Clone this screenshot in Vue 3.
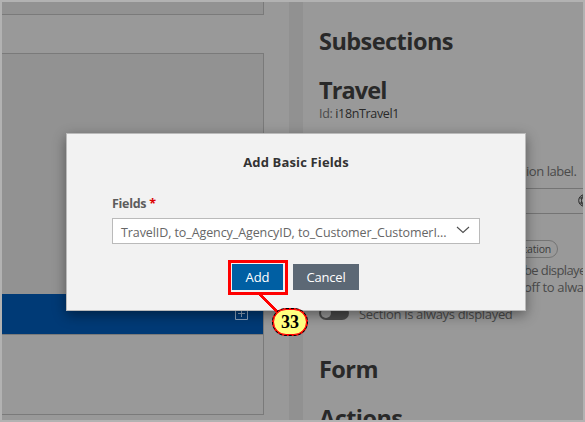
<script setup>
const fields = 'TravelID, to_Agency_AgencyID, to_Customer_CustomerI...'
</script>

<template>
  <div class="frame">
    <div class="page">
      <section class="outline">
        <div class="card first"></div>
        <div class="card second">
          <div class="selected">
            <svg width="13" height="14" viewBox="0 0 13 14" fill="none" stroke="#8da4bd">
              <path d="M.5 .5h12v13H.5zM6.5 4v7M3 7.5h7" />
            </svg>
          </div>
          <div class="rest"></div>
        </div>
      </section>
      <div class="gutter"></div>
      <section class="details">
        <h2 class="sub">Subsections</h2>
        <h2 class="travel">Travel</h2>
        <p class="id">Id: <b>i18nTravel1</b></p>
        <p class="hint">ion label.</p>
        <div class="input">
          <svg width="13" height="13" viewBox="0 0 13 13" fill="none" stroke="#292929">
            <circle cx="6.5" cy="6.5" r="5.8" />
            <ellipse cx="6.5" cy="6.5" rx="3" ry="5.8" />
            <path d="M1.5 4h10M1.5 9h10M6.5 .5v12" />
          </svg>
        </div>
        <div class="tag">tation</div>
        <p class="note n1">be displaye</p>
        <p class="note n2">off to alway</p>
        <div class="switch-row">
          <span class="switch"><i></i></span>
          <span class="switch-label">Section is always displayed</span>
        </div>
        <h2 class="form">Form</h2>
        <h2 class="actions">Actions</h2>
      </section>
    </div>

    <div class="dialog">
      <h1>Add Basic Fields</h1>
      <label>Fields <em>*</em></label>
      <div class="combo">
        <span>{{ fields }}</span>
        <svg width="14" height="8" viewBox="0 0 14 8" fill="none" stroke="#505050" stroke-width="1.1">
          <path d="M1 1l6 5.5L13 1" />
        </svg>
      </div>
      <div class="buttons">
        <button class="add">Add</button>
        <button class="cancel">Cancel</button>
      </div>
    </div>

    <div class="marker"></div>
    <svg class="leader" width="24" height="22" viewBox="0 0 24 22" shape-rendering="crispEdges">
      <path d="M2 1L22 20" stroke="#f00" stroke-width="2.8" />
    </svg>
    <div class="callout"><span>33</span></div>
  </div>
</template>

<style>
body { margin: 0; }
</style>

<style scoped>
* { box-sizing: border-box; }
h1, h2, p { margin: 0; }
.frame {
  position: relative;
  width: 585px;
  height: 422px;
  border: 2px solid #b2b2b2;
  overflow: hidden;
  font-family: "Open Sans", "Noto Sans", sans-serif;
  font-size: 13px;
  color: #4a4a4a;
}
.page { display: flex; height: 418px; overflow: hidden; background: #999; }
.outline { width: 287px; flex: none; }
.gutter { width: 14px; flex: none; background: #919191; }
.card { width: 262px; border-right: 1px solid #7a7a7a; border-bottom: 1px solid #7a7a7a; background: #929292; }
.first { height: 13px; }
.second { height: 362px; margin-top: 38px; border-top: 1px solid #7a7a7a; padding-top: 240px; }
.selected { height: 40px; display: flex; justify-content: flex-end; padding: 12px 15px 0 0; background: #003a76; }
.rest { height: 80px; border-top: 1px solid #7a7a7a; background: #999; }
.details { width: 280px; flex: none; padding: 23px 0 0 17px; overflow: hidden; white-space: nowrap; }
.details h2 { height: 32px; margin-left: -1px; line-height: 32px; font-size: 23.5px; font-weight: 700; letter-spacing: -0.55px; color: #292929; }
.details .travel { margin-top: 17px; letter-spacing: -0.9px; }
.id { height: 18px; line-height: 18px; margin: -1px 0 0 -1px; letter-spacing: -0.35px; font-size: 12.5px; }
.id b { font-weight: 500; color: #292929; }
.hint { height: 18px; line-height: 18px; margin-top: 39px; padding-left: 206px; letter-spacing: -0.45px; }
.input { height: 26px; margin-top: 8px; border: solid #747474; border-width: 1px 0; padding: 5px 0 0 258px; }
.input svg { display: block; }
.tag { width: 238px; height: 18px; margin-top: 26px; border: 1px solid #747474; border-radius: 9px; line-height: 16px; padding-right: 6px; text-align: right; font-size: 10.5px; letter-spacing: -0.2px; color: #3d3d3d; }
.note { height: 17px; line-height: 17px; padding-left: 204px; letter-spacing: -0.6px; }
.n1 { margin-top: 4px; }
.n2 { letter-spacing: -0.35px; }
.switch-row { display: flex; height: 18px; margin-top: 7px; }
.switch { width: 30px; height: 14px; margin: 3px 0 0 -1px; border-radius: 7px; background: #4a4a4a; padding: 2px; }
.switch i { display: block; width: 10px; height: 10px; border-radius: 50%; background: #999; }
.switch-label { line-height: 18px; margin: 2px 0 0 10px; letter-spacing: -0.32px; }
.details .form { margin-top: 32px; }
.details .actions { margin-top: 17px; }
.dialog {
  position: absolute;
  left: 64px;
  top: 131px;
  width: 460px;
  height: 178px;
  padding: 18px 45px 0;
  border: 1px solid #bababa;
  background: #f2f2f2;
  box-shadow: 0 4px 12px rgba(0, 0, 0, 0.42);
}
h1 { height: 20px; line-height: 20px; text-align: center; font-size: 13px; font-weight: 700; letter-spacing: 0.15px; color: #333; }
label { display: block; height: 20px; line-height: 20px; margin-top: 22px; font-size: 12.5px; font-weight: 700; color: #5c5c5c; letter-spacing: -0.3px; }
label em { font-style: normal; color: #d00; }
.combo { display: flex; align-items: center; justify-content: space-between; width: 368px; height: 26px; margin-top: 4px; padding: 0 9px 0 8px; border: 1px solid #bababa; background: #fff; color: #666; white-space: nowrap; font-size: 12.5px; letter-spacing: -0.09px; }
.combo svg { margin-top: -2px; }
.combo span { padding-top: 2px; }
.buttons { display: flex; gap: 10px; margin: 20px 0 0 120px; }
button { height: 26px; padding: 0; border: 0; color: #fff; font: 13px/26px "Open Sans", sans-serif; }
.add { width: 51px; background: #005fa3; }
.cancel { width: 66px; background: #5c6875; letter-spacing: -0.2px; }
.marker { position: absolute; left: 226px; top: 258px; width: 60px; height: 35px; border: 3px solid #f00; }
.leader { position: absolute; left: 255px; top: 291px; }
.callout { position: absolute; left: 270px; top: 306px; width: 36px; height: 28px; border: 1px dashed #000; border-radius: 14px; background: #f00; }
.callout span { display: block; height: 26px; border: 1px solid #f00; border-radius: 13px; background: #ffff80; color: #000; text-align: center; font: bold 18px/24px "Liberation Serif", serif; }
</style>
